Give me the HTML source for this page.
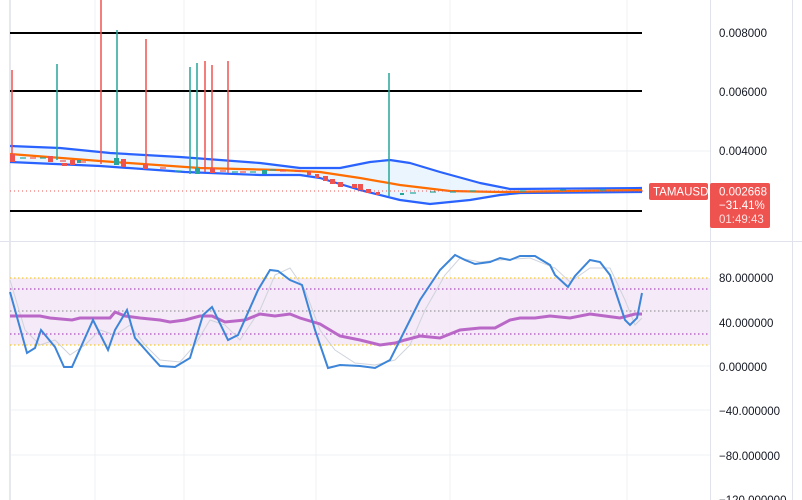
<!DOCTYPE html>
<html><head><meta charset="utf-8"><style>
html,body{margin:0;padding:0;background:#fff;width:802px;height:500px;overflow:hidden}
svg{display:block}
text{font-family:"Liberation Sans",sans-serif;font-size:11.5px;fill:#131722}
</style></head><body>
<svg width="802" height="500" viewBox="0 0 802 500">
<g stroke="#eef0f3" stroke-width="1">
<line x1="95" y1="0" x2="95" y2="500"/><line x1="184" y1="0" x2="184" y2="500"/><line x1="316" y1="0" x2="316" y2="500"/><line x1="450" y1="0" x2="450" y2="500"/><line x1="627" y1="0" x2="627" y2="500"/>
<line x1="10" y1="151" x2="710" y2="151"/><line x1="10" y1="366" x2="710" y2="366"/><line x1="10" y1="410" x2="710" y2="410"/><line x1="10" y1="455" x2="710" y2="455"/>
</g>
<line x1="10" y1="0" x2="10" y2="500" stroke="#e6e8ee" stroke-width="2"/>
<line x1="710.5" y1="0" x2="710.5" y2="500" stroke="#e0e3eb"/>
<line x1="792.5" y1="0" x2="792.5" y2="500" stroke="#e0e3eb"/>
<line x1="0" y1="241.5" x2="802" y2="241.5" stroke="#e0e3eb"/>
<g stroke="#000" stroke-width="2">
<line x1="10" y1="33" x2="642" y2="33"/><line x1="10" y1="91" x2="642" y2="91"/><line x1="10" y1="211" x2="642" y2="211"/>
</g>
<path d="M10,146 L60,148 110,153 180,157 260,163 300,168 340,168 370,162 390,160 410,163 440,172 480,183 510,189 642,188 L642,192 520,193 500,195 470,200 430,204 400,200 360,190 320,178 300,175 260,175 185,172 100,166 10,162 Z" fill="#e3f2fd" opacity="0.75"/>
<g fill="none" stroke-width="2.2" stroke-linejoin="round">
<polyline stroke="#2962ff" points="10,146 60,148 110,153 180,157 260,163 300,168 340,168 370,162 390,160 410,163 440,172 480,183 510,189 642,188"/>
<polyline stroke="#2962ff" points="10,162 100,166 185,172 260,175 300,175 320,178 360,190 400,200 430,204 470,200 500,195 520,193 642,192"/>
<polyline stroke="#ff6d00" points="10,154 100,161 200,168 280,170 320,172 360,178 400,185 450,191 500,192 642,190"/>
</g>
<line x1="10" y1="191" x2="645" y2="191" stroke="#ef5350" stroke-dasharray="1,3"/>
<g stroke-width="1.5">
<line x1="12" y1="70" x2="12" y2="162" stroke="#ef5350"/>
<line x1="57" y1="64" x2="57" y2="160" stroke="#26a69a"/>
<line x1="101" y1="0" x2="101" y2="164" stroke="#ef5350"/>
<line x1="117" y1="30" x2="117" y2="165" stroke="#26a69a"/>
<line x1="146" y1="39" x2="146" y2="168" stroke="#ef5350"/>
<line x1="190" y1="67" x2="190" y2="174" stroke="#26a69a"/>
<line x1="197" y1="63" x2="197" y2="174" stroke="#26a69a"/>
<line x1="205" y1="61" x2="205" y2="172" stroke="#ef5350"/>
<line x1="212" y1="65" x2="212" y2="173" stroke="#ef5350"/>
<line x1="228" y1="61" x2="228" y2="173" stroke="#ef5350"/>
<line x1="389" y1="73" x2="389" y2="196" stroke="#26a69a"/>
</g>
<g fill="#ef5350">
<rect x="10" y="154" width="5" height="8"/><rect x="48" y="156" width="5" height="6"/><rect x="70" y="160" width="5" height="5"/><rect x="121" y="159" width="5" height="8"/><rect x="143" y="164" width="5" height="5"/><rect x="62" y="163" width="5" height="3"/><rect x="210" y="168" width="5" height="5"/><rect x="307" y="171" width="4" height="4"/><rect x="315" y="174" width="4" height="4"/><rect x="323" y="176" width="5" height="5"/><rect x="330" y="179" width="5" height="5"/><rect x="338" y="182" width="5" height="5"/><rect x="352" y="184" width="5" height="4"/><rect x="358" y="184" width="5" height="6"/><rect x="366" y="189" width="5" height="4"/><rect x="376" y="192" width="4" height="3"/>
</g>
<g fill="#26a69a">
<rect x="114" y="158" width="5" height="7"/><rect x="195" y="168" width="5" height="6"/><rect x="262" y="170" width="5" height="4"/><rect x="77" y="160" width="4" height="3"/><rect x="400" y="193" width="4" height="2"/>
</g>
<g stroke="#ef5350" stroke-width="1.2">
<line x1="30" y1="158" x2="36" y2="158"/><line x1="60" y1="161" x2="66" y2="161"/><line x1="80" y1="162" x2="86" y2="162"/><line x1="160" y1="168" x2="166" y2="168"/><line x1="220" y1="171" x2="226" y2="171"/><line x1="240" y1="172" x2="246" y2="172"/><line x1="280" y1="171" x2="286" y2="171"/><line x1="295" y1="171" x2="301" y2="171"/>
</g>
<g stroke="#26a69a" stroke-width="1.2">
<line x1="20" y1="158" x2="26" y2="158"/><line x1="40" y1="158" x2="46" y2="158"/><line x1="175" y1="171" x2="181" y2="171"/><line x1="232" y1="172" x2="238" y2="172"/><line x1="250" y1="172" x2="256" y2="172"/><line x1="270" y1="170" x2="276" y2="170"/><line x1="410" y1="193" x2="416" y2="193"/><line x1="430" y1="192" x2="436" y2="192"/><line x1="450" y1="192" x2="456" y2="192"/><line x1="470" y1="191" x2="476" y2="191"/><line x1="520" y1="191" x2="526" y2="191"/><line x1="560" y1="190" x2="566" y2="190"/><line x1="600" y1="190" x2="606" y2="190"/>
</g>
<text x="719" y="37">0.008000</text>
<text x="719" y="96">0.006000</text>
<text x="719" y="155">0.004000</text>
<rect x="649" y="183" width="59" height="17" rx="2" fill="#ef5350"/>
<text x="653" y="195.5" style="fill:#fff">TAMAUSD</text>
<rect x="710" y="183" width="60" height="45" rx="2" fill="#ef5350"/>
<text x="719" y="195.5" style="fill:#fff">0.002668</text>
<text x="719" y="209" style="fill:#fff">−31.41%</text>
<text x="719" y="223" style="fill:#fde0df">01:49:43</text>
<rect x="10" y="278" width="700" height="67" fill="#f3e5f5" opacity="0.8"/>
<g stroke-dasharray="1.5,2.5" stroke-width="1">
<line x1="10" y1="278" x2="710" y2="278" stroke="#f0c000"/>
<line x1="10" y1="289" x2="710" y2="289" stroke="#9c27b0"/>
<line x1="10" y1="311" x2="710" y2="311" stroke="#888"/>
<line x1="10" y1="334" x2="710" y2="334" stroke="#9c27b0"/>
<line x1="10" y1="345" x2="710" y2="345" stroke="#f0c000"/>
</g>
<polyline fill="none" stroke="#cfd3dc" stroke-width="1" points="10,280 25,330 40,345 55,340 70,355 85,345 100,330 115,335 130,325 145,345 160,360 180,362 195,345 210,320 225,325 240,340 260,310 275,275 290,268 305,290 320,330 335,350 355,363 375,365 395,360 410,345 425,310 445,275 460,258 480,262 500,260 530,258 555,268 570,282 590,268 610,268 625,300 635,325 642,318"/>
<polyline fill="none" stroke="#ba68c8" stroke-width="3" points="10,316 40,316 50,318 72,320 80,318 95,318 110,318 115,312 125,316 140,318 160,320 170,322 185,320 200,316 212,316 225,322 245,320 260,314 275,316 290,314 300,318 320,324 340,336 360,340 380,345 395,343 405,340 420,336 440,338 460,330 480,328 495,328 510,320 520,318 535,318 550,316 570,318 590,314 605,316 620,318 635,314 642,314"/>
<polyline fill="none" stroke="#3d85d8" stroke-width="2" points="10,292 27,353 35,348 41,330 55,347 64,367 72,367 93,320 108,350 115,330 127,310 135,338 150,355 160,366 175,367 190,358 203,315 212,307 228,340 238,335 258,290 270,270 278,271 290,280 302,285 315,330 328,368 340,365 360,366 375,368 390,360 400,340 420,300 440,270 455,255 465,260 475,264 490,262 500,258 510,260 520,256 535,256 550,265 555,275 568,287 575,276 590,260 600,262 610,275 625,320 630,325 637,318 642,293"/>
<text x="719" y="282">80.000000</text>
<text x="719" y="327">40.000000</text>
<text x="719" y="371">0.000000</text>
<text x="719" y="415">−40.000000</text>
<text x="719" y="460">−80.000000</text>
<text x="719" y="504">−120.000000</text>
</svg>
</body></html>
